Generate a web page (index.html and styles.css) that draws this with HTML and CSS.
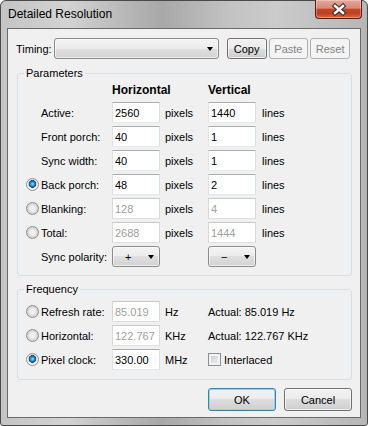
FILE: index.html
```html
<!DOCTYPE html>
<html lang="en">
<head>
    <meta charset="UTF-8">
    <title>Detailed Resolution</title>
    <link rel="stylesheet" href="styles.css">
</head>
<body>

<div class="window">
    <div class="titlebar">
        <span class="title">Detailed Resolution</span>
        <span class="close">
            <svg width="45" height="17" viewBox="0 0 45 17">
                <path d="M19 5 L27 12 M27 5 L19 12" stroke="#3b3030" stroke-width="4.6" stroke-linecap="square"/>
                <path d="M19 5 L27 12 M27 5 L19 12" stroke="#fff" stroke-width="2.4" stroke-linecap="square"/>
            </svg>
        </span>
    </div>

    <div class="client">
        <div class="timing-row">
            <span class="timing-label">Timing:</span>
            <div class="combo timing-combo"><span class="arrow"></span></div>
            <button class="btn small">Copy</button>
            <button class="btn small" disabled>Paste</button>
            <button class="btn small" disabled>Reset</button>
        </div>

        <fieldset class="group params">
            <legend>Parameters</legend>
            <div class="grid params-grid">
                <span></span><span></span>
                <span class="head">Horizontal</span><span></span>
                <span class="head">Vertical</span><span></span>

                <span></span><span>Active:</span>
                <input class="field" type="text" value="2560"><span class="unit">pixels</span>
                <input class="field" type="text" value="1440"><span class="unit-v">lines</span>

                <span></span><span>Front porch:</span>
                <input class="field" type="text" value="40"><span class="unit">pixels</span>
                <input class="field" type="text" value="1"><span class="unit-v">lines</span>

                <span></span><span>Sync width:</span>
                <input class="field" type="text" value="40"><span class="unit">pixels</span>
                <input class="field" type="text" value="1"><span class="unit-v">lines</span>

                <span class="radio on"></span><span>Back porch:</span>
                <input class="field" type="text" value="48"><span class="unit">pixels</span>
                <input class="field" type="text" value="2"><span class="unit-v">lines</span>

                <span class="radio"></span><span>Blanking:</span>
                <input class="field" type="text" value="128" disabled><span class="unit">pixels</span>
                <input class="field" type="text" value="4" disabled><span class="unit-v">lines</span>

                <span class="radio"></span><span>Total:</span>
                <input class="field" type="text" value="2688" disabled><span class="unit">pixels</span>
                <input class="field" type="text" value="1444" disabled><span class="unit-v">lines</span>

                <span></span><span>Sync polarity:</span>
                <div class="combo pol"><span class="pol-text">+</span><span class="arrow"></span></div><span></span>
                <div class="combo pol"><span class="pol-text">&minus;</span><span class="arrow"></span></div><span></span>
            </div>
        </fieldset>

        <fieldset class="group freq">
            <legend>Frequency</legend>
            <div class="grid freq-grid">
                <span class="radio"></span><span>Refresh rate:</span>
                <input class="field" type="text" value="85.019" disabled><span class="unit">Hz</span>
                <span>Actual: 85.019 Hz</span>

                <span class="radio"></span><span>Horizontal:</span>
                <input class="field" type="text" value="122.767" disabled><span class="unit">KHz</span>
                <span>Actual: 122.767 KHz</span>

                <span class="radio on"></span><span>Pixel clock:</span>
                <input class="field" type="text" value="330.00"><span class="unit">MHz</span>
                <span class="check-wrap"><span class="check"></span>Interlaced</span>
            </div>
        </fieldset>

        <div class="button-row">
            <button class="btn wide default">OK</button>
            <button class="btn wide">Cancel</button>
        </div>
    </div>
</div>

</body>
</html>
```

FILE: styles.css
```css
body {
    margin: 0;
    background: #fff;
    font-family: "Liberation Sans", Arial, sans-serif;
    font-size: 11px;
    color: #000;
}
.window {
    width: 368px;
    height: 426px;
    box-sizing: border-box;
    border: 1px solid #4a4a4a;
    border-radius: 6px 6px 3px 3px;
    background: linear-gradient(to right, #c4c4c4 0%, #d3d3d3 18%, #b4b4b4 36%, #a8a8a8 44%, #c2c2c2 62%, #cbcbcb 75%, #b6b6b6 100%);
    padding-bottom: 7px;
    display: flex;
    flex-direction: column;
}
.titlebar {
    height: 27px;
    display: flex;
    align-items: center;
    padding-left: 7px;
}
.title {
    font-size: 12px;
    line-height: 15px;
}
.close {
    margin-left: auto;
    align-self: flex-start;
    margin-top: -1px;
    margin-right: 5px;
    width: 47px;
    height: 19px;
    box-sizing: border-box;
    border: 1px solid #5a1d14;
    border-top: none;
    border-radius: 0 0 4px 4px;
    background: linear-gradient(#e4a798 0%, #d88a78 45%, #c1452a 52%, #c0401f 75%, #dc6a42 100%);
    box-shadow: inset 0 0 0 1px rgba(255, 255, 255, 0.3);
    display: flex;
    align-items: center;
}
.close svg {
    display: block;
}
.client {
    flex: 1;
    margin: 0 6px;
    border: 1px solid #6a6a6a;
    background: #f0f0f0;
    display: flex;
    flex-direction: column;
}

/* timing row */
.timing-row {
    display: flex;
    align-items: center;
    height: 21px;
    padding: 9px 8px 0;
}
.timing-label {
    width: 38px;
}
.timing-combo {
    width: 166px;
    margin-right: 8px;
}
.btn.small {
    width: 40px;
    margin-right: 2px;
}

/* controls */
.combo {
    height: 21px;
    box-sizing: border-box;
    border: 1px solid #8a8a8a;
    border-radius: 3px;
    background: linear-gradient(#f3f3f3, #ececec 50%, #dfdfdf 50%, #d3d3d3);
    box-shadow: inset 0 0 0 1px rgba(255, 255, 255, 0.6);
    display: flex;
    align-items: center;
}
.arrow {
    width: 0;
    height: 0;
    border-left: 3.5px solid transparent;
    border-right: 3.5px solid transparent;
    border-top: 4px solid #000;
    margin-left: auto;
    margin-right: 5px;
}
.pol {
    width: 48px;
}
.pol-text {
    padding-left: 12px;
}
.btn {
    font: inherit;
    color: #000;
    height: 21px;
    box-sizing: border-box;
    border: 1px solid #707070;
    border-radius: 3px;
    background: linear-gradient(#f2f2f2, #ebebeb 50%, #dddddd 50%, #cfcfcf);
    box-shadow: inset 0 0 0 1px rgba(255, 255, 255, 0.6);
    padding: 0;
}
.btn:disabled {
    border-color: #adb2b5;
    background: #f4f4f4;
    color: #838383;
    box-shadow: none;
}
.btn.default {
    border-color: #3c7fb1;
    box-shadow: inset 0 0 0 1px #8fd3f5;
}
.field {
    width: 48px;
    height: 21px;
    box-sizing: border-box;
    margin: 0;
    padding: 0 2px;
    border: 1px solid;
    border-color: #abadb3 #dbdfe6 #e3e9ef #e2e3ea;
    background: #fff;
    font: inherit;
    color: #000;
    outline: none;
}
.field:disabled {
    color: #a0a0a0;
    border-color: #c8c8c8 #d9d9d9 #e0e0e0 #d9d9d9;
    background: #fff;
}
.radio {
    width: 13px;
    height: 13px;
    box-sizing: border-box;
    border-radius: 50%;
    border: 1px solid #8e8f8f;
    background: radial-gradient(circle at 50% 50%, #f7f7f7 0, #eaeaea 3px, #cfcfcf 5.5px);
}
.radio.on {
    background: radial-gradient(circle at 50% 45%, #a6e3fb 0, #3ba3e0 1.5px, #1565a8 3px, #0d3f73 3.6px, #e4e4e4 4.1px, #f6f6f6 5.5px);
}
.check-wrap {
    display: flex;
    align-items: center;
}
.check {
    width: 13px;
    height: 13px;
    box-sizing: border-box;
    border: 1px solid #8e8f8f;
    background: linear-gradient(135deg, #c6cace, #f4f4f4);
    box-shadow: inset 0 0 0 2px #f3f3f3;
    margin-right: 3px;
}

/* groups */
.group {
    border: 1px solid #d5dfe5;
    border-radius: 3px;
    min-width: 0;
}
.group legend {
    padding: 0 2px;
    margin-left: -2px;
    line-height: 14px;
}
.params {
    margin: 7px 8px 0 9px;
    padding: 4px 0 8px 8px;
}
.freq {
    margin: 6px 8px 0 9px;
    padding: 5px 0 9px 8px;
}
.grid {
    display: grid;
    row-gap: 3px;
    align-items: center;
}
.params-grid {
    grid-template-columns: 15px 71px 48px 48px 48px auto;
    grid-template-rows: 15px;
    grid-auto-rows: 21px;
}
.freq-grid {
    grid-template-columns: 15px 71px 48px 48px auto;
    grid-auto-rows: 21px;
}
.head {
    align-self: start;
    font-weight: bold;
    font-size: 12px;
    line-height: 13px;
}
.unit {
    padding-left: 5px;
}
.unit-v {
    padding-left: 6px;
}

/* bottom buttons */
.button-row {
    display: flex;
    justify-content: flex-end;
    padding: 8px 8px 0;
}
.btn.wide {
    width: 68px;
    height: 23px;
    margin-left: 8px;
}
```
